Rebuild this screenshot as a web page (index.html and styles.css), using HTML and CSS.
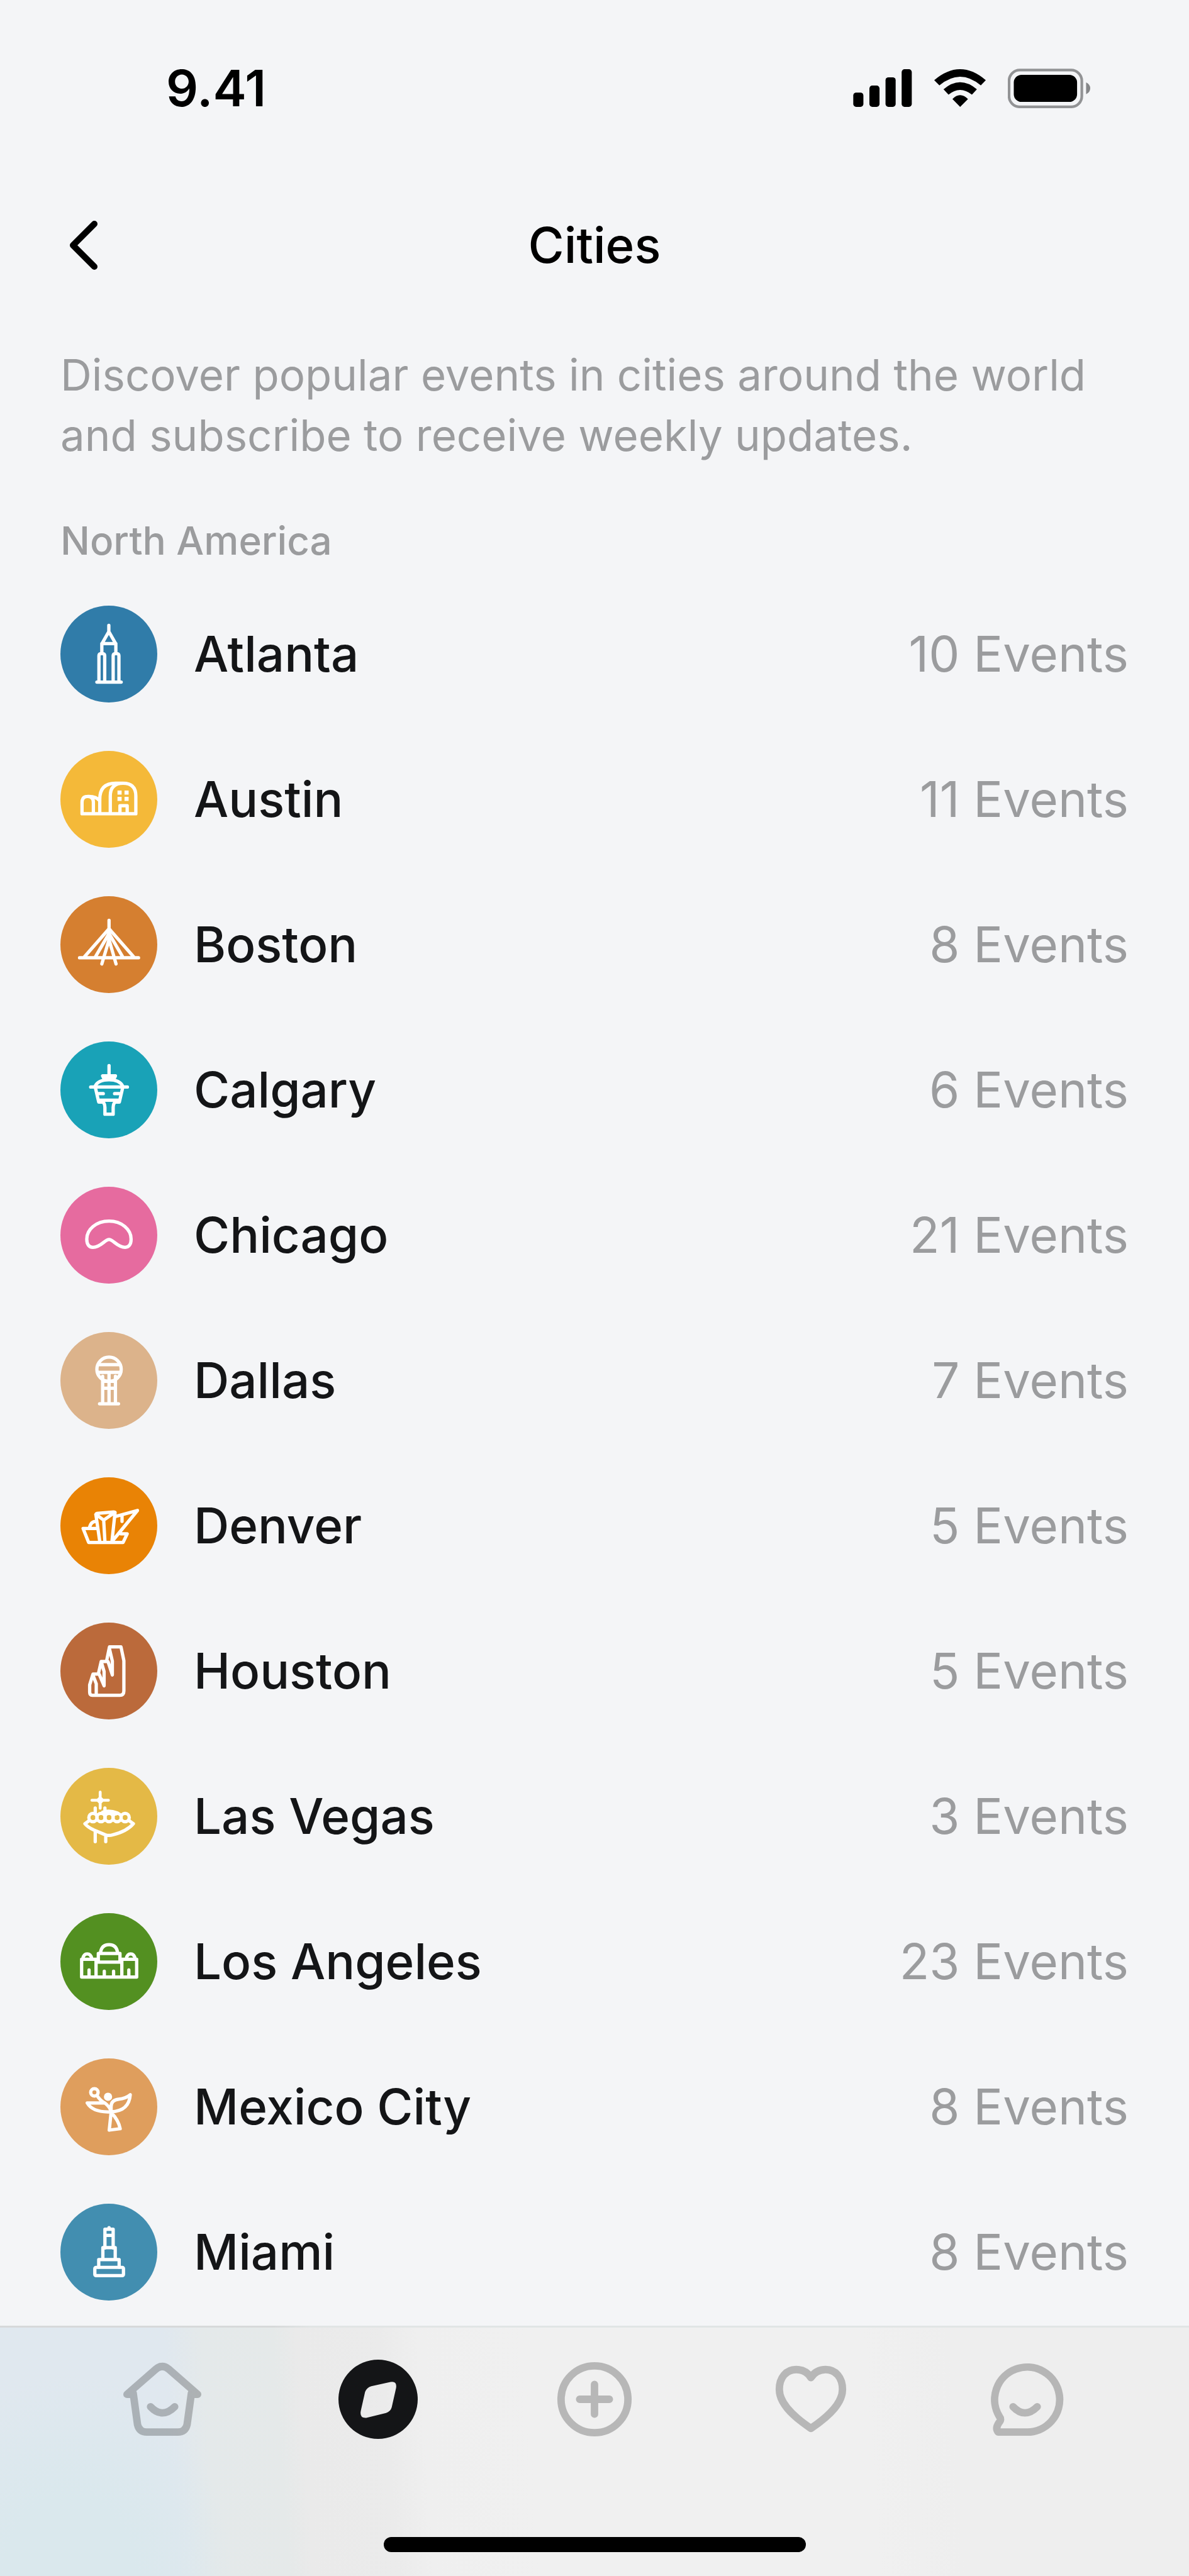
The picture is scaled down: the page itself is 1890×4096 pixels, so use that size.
FILE: index.html
```html
<!DOCTYPE html>
<html lang="en">
<head>
<meta charset="utf-8">
<meta name="viewport" content="width=device-width, initial-scale=1">
<title>Cities</title>
<link rel="stylesheet" href="styles.css">
</head>
<body>
<div class="status">
  <span class="time">9.41</span>
  <div class="indicators">
    <svg class="signal" viewBox="112 96 286 182" aria-hidden="true"><rect x="113" y="209" width="49" height="69" rx="14"/><rect x="191" y="175" width="49" height="103" rx="14"/><rect x="269" y="135" width="49" height="143" rx="14"/><rect x="347" y="96" width="49" height="182" rx="14"/></svg>
    <svg class="wifi" viewBox="503 96 249 182" aria-hidden="true"><path d="M503 149Q628 43 752 149L728 174Q628 90 528 174ZM548 193Q628 125 709 193L685 219Q628 173 572 219ZM591 240Q628 202 666 240L628 278Z"/></svg>
    <svg class="battery" viewBox="861 91 401 192" aria-hidden="true"><rect x="867" y="98" width="354" height="179" rx="52" fill="none" stroke="#929395" stroke-width="13"/><rect x="890" y="121" width="308" height="132" rx="38"/><path fill="#858688" d="M1242 158Q1262 168 1262 187Q1262 206 1242 215Z"/></svg>
  </div>
</div>
<header class="topbar">
  <button class="back" type="button" aria-label="Back"><svg viewBox="0 0 48 80" aria-hidden="true"><path d="M42 6L8 40L42 74"/></svg></button>
  <h1 class="title">Cities</h1>
</header>
<main class="content">
  <p class="intro">Discover popular events in cities around the world and subscribe to receive weekly updates.</p>
  <h2 class="region">North America</h2>
  <ul class="cities">
    <li><a class="city" href="#atlanta"><span class="badge atlanta"><svg viewBox="52 59 470 470" aria-hidden="true"><path d="M287 155V185L254 243H320L287 185M253 243V290M321 243V290M239 430V302Q239 291 253 291Q267 291 267 302V430M308 430V302Q308 291 322 291Q336 291 336 302V430M229 430H347"/></svg></span><span class="name">Atlanta</span><span class="count">10 Events</span></a></li>
    <li><a class="city" href="#austin"><span class="badge austin"><svg viewBox="52 763 470 470" aria-hidden="true"><path d="M157 1068V1013Q157 984 184 984Q212 984 212 1013V1068M184 984Q225 982 243 1005M243 1068V998Q243 920 320 920H356M294 1068V982Q294 920 356 920Q418 920 418 982V1068M157 1068H418M341 1068V1029H376V1068"/><path class="solid" d="M329 955h20v20h-20zM363 955h20v20h-20zM329 986h20v20h-20zM363 986h20v20h-20z"/></svg></span><span class="name">Austin</span><span class="count">11 Events</span></a></li>
    <li><a class="city" href="#boston"><span class="badge boston"><svg viewBox="52 57 470 470" aria-hidden="true"><path d="M288 174V285M288 215L169 351M288 215L407 351M288 238L222 351M288 238L354 351M288 268L253 386M288 268L322 386M145 356H431"/></svg></span><span class="name">Boston</span><span class="count">8 Events</span></a></li>
    <li><a class="city" href="#calgary"><span class="badge calgary"><svg viewBox="52 760 470 470" aria-hidden="true"><path d="M288 877V925M257 927H319L311 943H265ZM220 978Q235 946 288 946Q340 946 355 978M199 981H377M221 981L238 1054H258M355 981L338 1054H318M245 1045H331M238 1013H260M338 1013H315M248 1048Q268 1055 268 1080V1113H308V1080Q308 1055 328 1048"/></svg></span><span class="name">Calgary</span><span class="count">6 Events</span></a></li>
    <li><a class="city" href="#chicago"><span class="badge chicago"><svg viewBox="52 54 470 470" aria-hidden="true"><path d="M288 310C268 310 248 348 210 348C190 348 180 333 180 308C180 262 225 221 288 221C350 221 395 262 395 308C395 333 385 348 366 348C328 348 308 310 288 310Z"/></svg></span><span class="name">Chicago</span><span class="count">21 Events</span></a></li>
    <li><a class="city" href="#dallas"><span class="badge dallas"><svg viewBox="52 757 470 470" aria-hidden="true"><circle cx="288" cy="938" r="59"/><path d="M240 915H336M236 953H340M257 972V1105M288 953V1105M319 972V1105M257 1030H319M257 996H319M242 1105H334"/></svg></span><span class="name">Dallas</span><span class="count">7 Events</span></a></li>
    <li><a class="city" href="#denver"><span class="badge denver"><svg viewBox="52 50 470 470" aria-hidden="true"><path d="M228 298H162L189 366H356L376 324H345M193 295Q200 262 228 264M243 362L224 230Q225 226 230 225L310 218Q316 218 317 222L302 362M224 230L262 258L317 220M262 258L268 362M317 241L426 211L302 362M351 238V264"/></svg></span><span class="name">Denver</span><span class="count">5 Events</span></a></li>
    <li><a class="city" href="#houston"><span class="badge houston"><svg viewBox="52 753 470 470" aria-hidden="true"><path d="M276 940L290 871H346L360 938V1085Q360 1106 340 1106H207Q194 1106 194 1090V1055L210 1003H240L264 1060V990L250 942H283L304 1007V940L290 880M250 942L236 1003M210 1008L226 1050V1106"/></svg></span><span class="name">Houston</span><span class="count">5 Events</span></a></li>
    <li><a class="city" href="#las-vegas"><span class="badge las-vegas"><svg viewBox="52 77 470 470" aria-hidden="true"><path class="star" d="M245 195V273M205 234H285M245 222L257 234L245 246L233 234Z"/><path d="M221 272V300M268 272V300M221 385V435M272 405V435M258 292Q288 280 328 296M262 300Q288 276 322 300M192 333L171 348Q185 365 215 379L270 402Q288 408 306 402Q375 385 406 348L385 333"/><circle cx="210" cy="318" r="20"/><circle cx="249" cy="318" r="20"/><circle cx="288" cy="318" r="20"/><circle cx="327" cy="318" r="20"/><circle cx="366" cy="318" r="20"/></svg></span><span class="name">Las Vegas</span><span class="count">3 Events</span></a></li>
    <li><a class="city" href="#los-angeles"><span class="badge los-angeles"><svg viewBox="52 780 470 470" aria-hidden="true"><path d="M236 1004H155V1090H422V1004H341M225 1004V1090M350 1004V1090M225 1018H350M236 1018V976H341V1018M246 976Q250 933 288 933Q326 933 330 976M160 1002Q165 978 182 978Q200 978 205 1002M371 1002Q376 978 393 978Q410 978 415 1002M191 1056V1085M265 1062V1085M310 1062V1085M384 1056V1085"/></svg></span><span class="name">Los Angeles</span><span class="count">23 Events</span></a></li>
    <li><a class="city" href="#mexico-city"><span class="badge mexico-city"><svg viewBox="52 74 470 470" aria-hidden="true"><circle cx="217" cy="239" r="18"/><circle class="solid" cx="283" cy="260" r="20"/><path d="M229 253Q245 280 270 292Q290 308 298 330M265 290H182Q210 338 298 333M298 330V308Q298 276 335 272Q370 268 391 250Q385 330 298 333M298 336L289 422L342 415Q335 375 298 336"/></svg></span><span class="name">Mexico City</span><span class="count">8 Events</span></a></li>
    <li><a class="city" href="#miami"><span class="badge miami"><svg viewBox="52 777 470 470" aria-hidden="true"><path d="M288 893V900M268 992V901H308V992M268 931H308M258 1048V990H318V1048M238 1085V1048H337V1085"/><rect x="219" y="1086" width="139" height="40" rx="6"/></svg></span><span class="name">Miami</span><span class="count">8 Events</span></a></li>
  </ul>
</main>
<footer class="dock">
  <nav class="tabs" aria-label="Main">
    <a class="tab" href="#home" aria-label="Home"><svg viewBox="0 0 128 132" aria-hidden="true"><path d="M17 58H7L54 17Q64 9 74 17L121 58H111M17 56L24 107Q27 119 39 119H89Q101 119 104 107L111 56M45 78Q64 98 84 78"/></svg></a>
    <a class="tab current" href="#explore" aria-label="Explore" aria-current="page"><svg viewBox="0 0 128 132" aria-hidden="true"><path fill-rule="evenodd" d="M64 2A64 64 0 1 1 64 130A64 64 0 1 1 64 2ZM53 45L84 38Q95 36 93 48L86 79Q84 86 77 88L45 96Q34 97 36 85L43 54Q46 47 53 45Z"/></svg></a>
    <a class="tab" href="#create" aria-label="Create"><svg viewBox="0 0 128 132" aria-hidden="true"><circle cx="64" cy="66" r="54"/><path d="M64 42V90M40 66H88"/></svg></a>
    <a class="tab" href="#saved" aria-label="Saved"><svg viewBox="0 0 128 132" aria-hidden="true"><path d="M64 113C30 90 13 70 13 50C13 31 24 18 40 18C51 18 59 23 64 31C69 23 77 18 88 18C104 18 115 31 115 50C115 70 98 90 64 113Z"/></svg></a>
    <a class="tab" href="#messages" aria-label="Messages"><svg viewBox="2 0 128 132" aria-hidden="true"><path d="M65 119H20Q15 113 21 104Q26 99 22 94A52.500 52.500 0 1 1 65 119ZM44 78Q63 98 83 78"/></svg></a>
  </nav>
  <div class="home-indicator"></div>
</footer>
</body>
</html>
```
FILE: styles.css
```css
* { box-sizing: border-box; }

body {
  margin: 0;
  min-height: 100vh;
  display: flex;
  flex-direction: column;
  background: #f4f5f7;
  color: #141517;
  font-family: Inter, "Liberation Sans", sans-serif;
}

svg { display: block; }

.status {
  display: flex;
  align-items: center;
  justify-content: space-between;
  height: 280px;
  padding: 0 157px 0 264px;
  color: #000;
}
.time { font-size: 80px; font-weight: 600; line-height: 96px; }
.indicators { display: flex; align-items: center; gap: 35px; }
.signal { width: 94px; height: 60px; }
.wifi { width: 82px; height: 60px; }
.battery { width: 131px; height: 63px; }

.topbar {
  display: grid;
  grid-template-columns: 1fr auto 1fr;
  align-items: center;
  height: 220px;
  padding: 0 96px;
  color: #000;
}
.back {
  justify-self: start;
  padding: 0 12px;
  border: 0;
  background: none;
  color: inherit;
}
.back svg {
  width: 48px;
  height: 80px;
  fill: none;
  stroke: currentColor;
  stroke-width: 10;
  stroke-linecap: round;
  stroke-linejoin: round;
}
.title { margin: 0; font-size: 78px; font-weight: 500; line-height: 96px; }

.content { flex: 1; padding: 48px 96px 0; }
.intro {
  margin: 0 0 84px;
  color: #9b9c9e;
  font-size: 69px;
  line-height: 96px;
}
.region {
  margin: 0 0 28px;
  color: #9b9c9e;
  font-size: 62px;
  font-weight: 500;
  line-height: 72px;
}

.cities { margin: 0; padding: 0; list-style: none; }
.city {
  display: flex;
  align-items: center;
  height: 231px;
  color: inherit;
  font-size: 78px;
  line-height: 96px;
  text-decoration: none;
}
.badge {
  flex: none;
  width: 154px;
  height: 154px;
  margin-right: 58px;
  border-radius: 50%;
}
.badge svg {
  fill: none;
  stroke: #fff;
  stroke-width: 16;
  stroke-linecap: round;
  stroke-linejoin: round;
}
.badge .solid { fill: #fff; stroke: none; }
.badge .star { fill: #fff; stroke-width: 14; }
.name { flex: 1; font-weight: 500; }
.count { color: #9b9c9e; }

.atlanta { background: #307ca9; }
.austin { background: #f4b939; }
.boston { background: #d57f30; }
.calgary { background: #19a2b7; }
.chicago { background: #e66b9f; }
.dallas { background: #dcb38b; }
.denver { background: #e98305; }
.houston { background: #bb6a3b; }
.las-vegas { background: #e4b946; }
.los-angeles { background: #539021; }
.mexico-city { background: #df9e5d; }
.miami { background: #428eb0; }

.dock {
  padding-bottom: 38px;
  background:
    linear-gradient(90deg, #d7d9da 23%, #e1e5e5 26%) top / 100% 3px no-repeat,
    radial-gradient(ellipse 260px 320px at 110px 100%, #dae8ed 40%, #dae8ed00 100%),
    linear-gradient(86deg, #e0e8ef 15%, #e4e9ea 18%, #e5e9e9 24%, #eaeaea 26%, #ebebeb 33%, #efefef 36%, #f0f0f0 45%, #f0f0f0 73%, #eeeeee 80%);
}
.tabs {
  display: grid;
  grid-template-columns: repeat(5, 1fr);
  padding: 52px 86px 0;
}
.tab { display: flex; justify-content: center; }
.tab svg {
  width: 126px;
  height: 130px;
  fill: none;
  stroke: #000;
  stroke-width: 12;
  stroke-linecap: round;
  stroke-linejoin: round;
  opacity: 0.23;
}
.tab.current svg { fill: #141517; stroke: none; opacity: 1; }
.home-indicator {
  width: 671px;
  height: 24px;
  margin: 154px auto 0;
  border-radius: 12px;
  background: #000;
}
```
